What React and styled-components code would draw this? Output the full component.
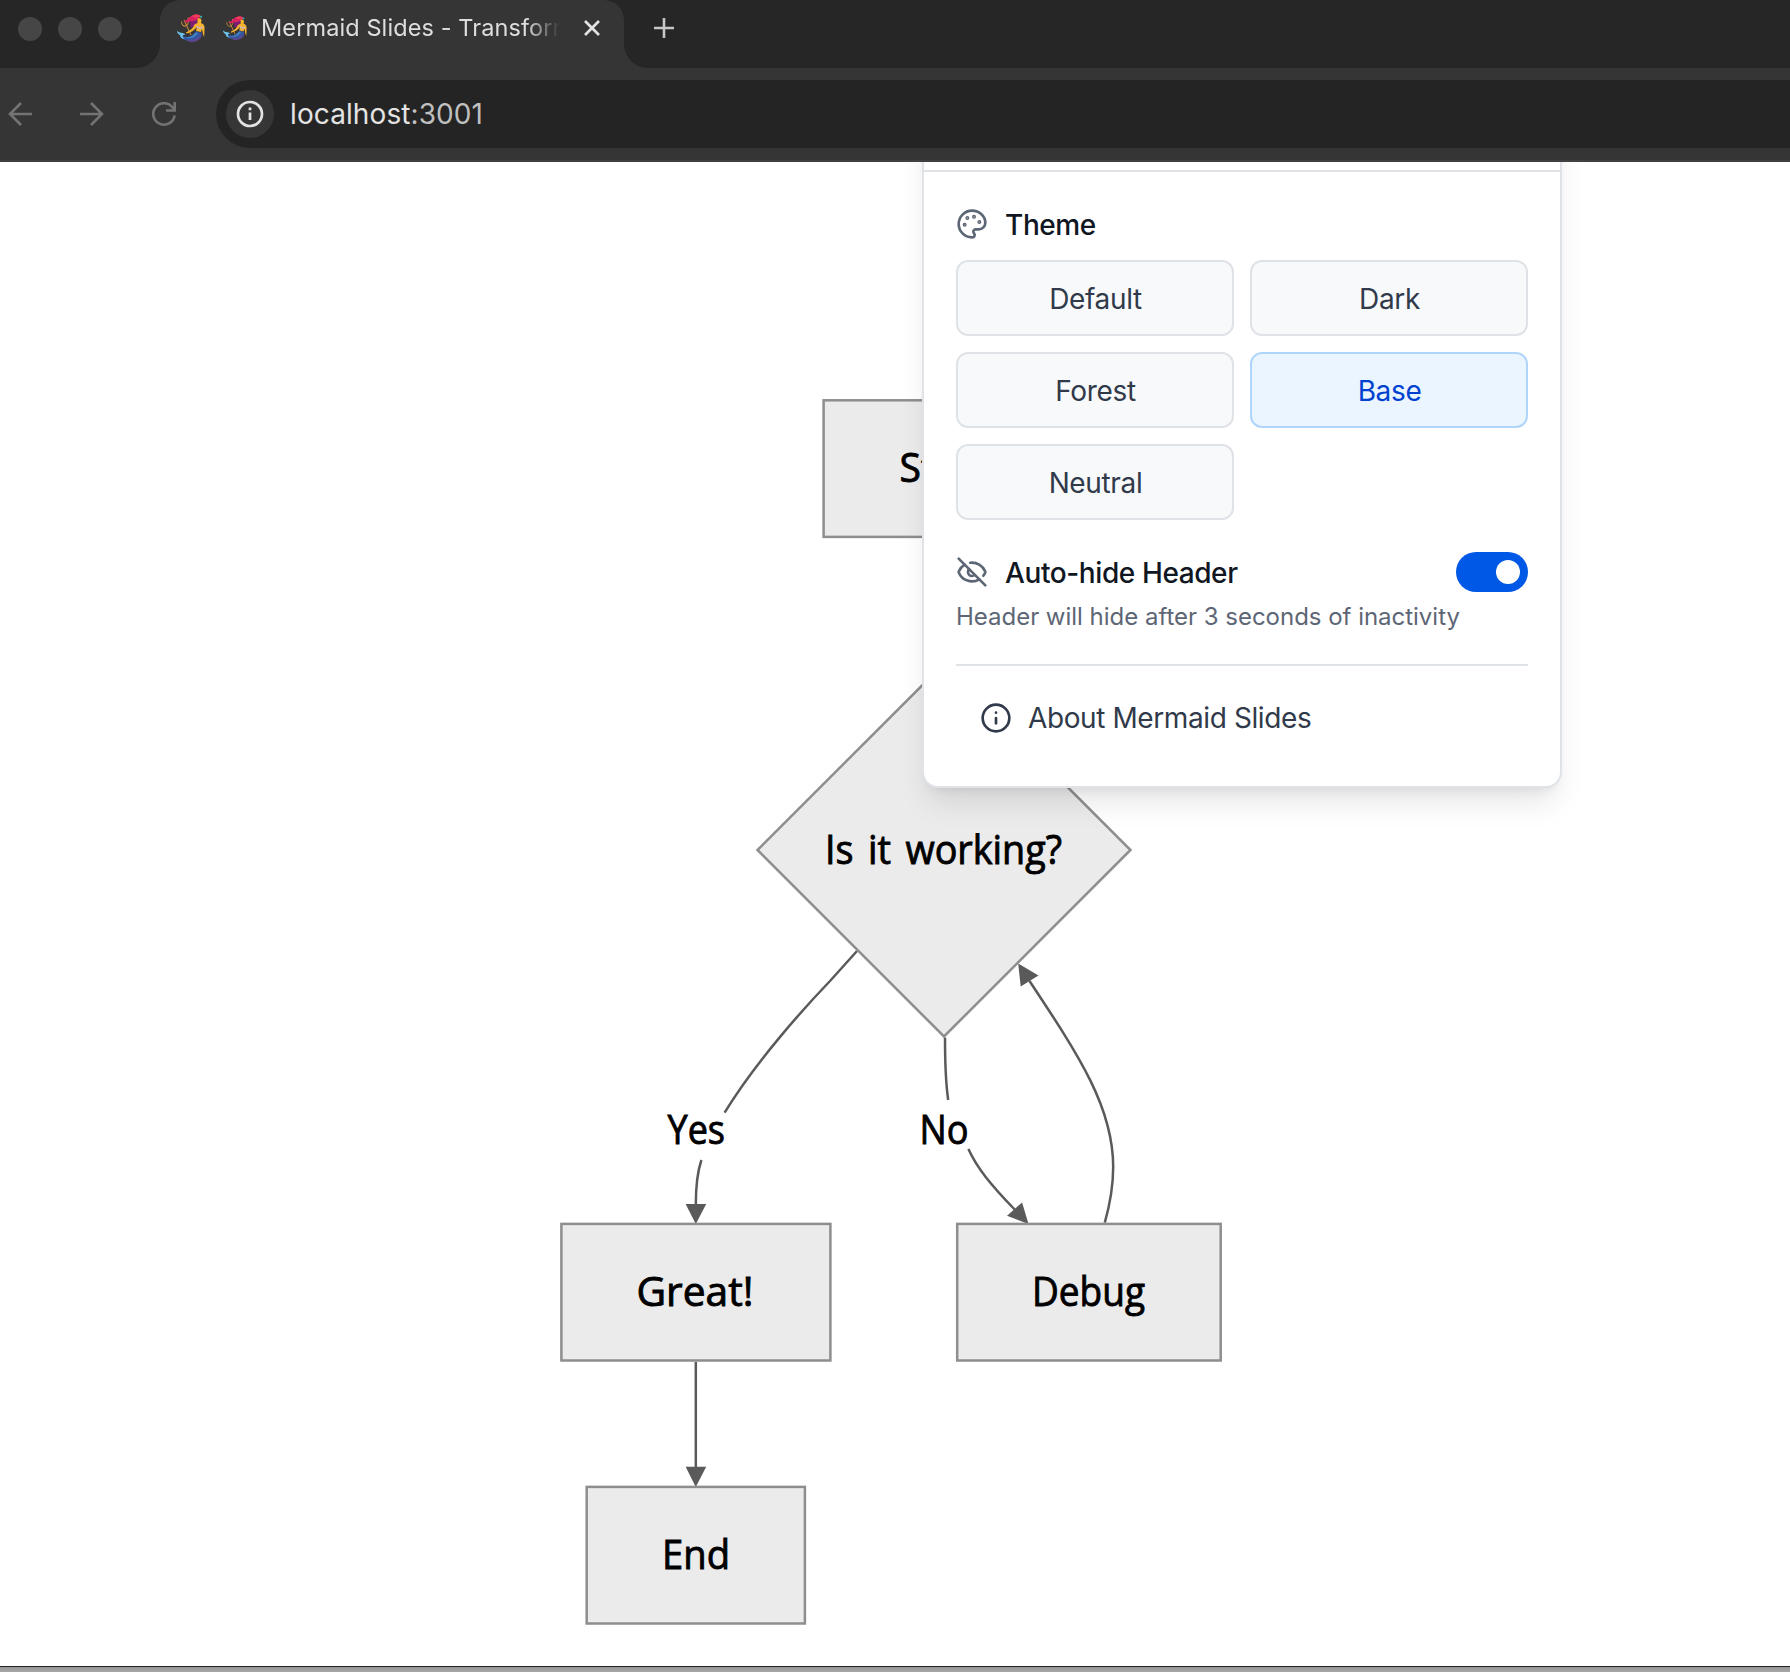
import React from "react";
import styled, { createGlobalStyle } from "styled-components";
import { Palette, EyeOff, Info } from "lucide-react";

const GlobalStyle = createGlobalStyle`
  * { box-sizing: border-box; }
  html, body { margin: 0; padding: 0; background: #fff; overflow: hidden; }
  body { font-family: Inter, "Liberation Sans", sans-serif; }
`;

const Window = styled.div`
  display: flex;
  flex-direction: column;
  width: 1790px;
  height: 1672px;
  overflow: hidden;
  background: #353535;
`;

/* Tab strip */
const TabStrip = styled.div`
  display: flex;
  height: 68px;
  flex: none;
`;

const WindowControls = styled.div`
  display: flex;
  gap: 16px;
  width: 160px;
  padding: 17px 0 0 18px;
  background: #262626;
  border-bottom-right-radius: 24px;
`;

const ControlDot = styled.span`
  width: 24px;
  height: 24px;
  border-radius: 50%;
  background: #464646;
`;

const TabSlot = styled.div`
  width: 464px;
  background: linear-gradient(#262626 0 30px, #353535 30px);
`;

const Tab = styled.div`
  display: flex;
  align-items: center;
  height: 56px;
  padding-left: 17px;
  border-radius: 20px 20px 0 0;
  background: #353535;
`;

const TabTitle = styled.div`
  display: flex;
  align-items: center;
  width: 338px;
  margin-left: 18px;
  overflow: hidden;
  white-space: nowrap;
  font-size: 23.5px;
  line-height: 34px;
  letter-spacing: 0.1px;
  color: #dedede;
  mask-image: linear-gradient(90deg, #000 302px, transparent 337px);
`;

const TitleText = styled.span`
  margin-left: 14px;
`;

const CloseIcon = styled.svg`
  margin-left: 22px;
  flex: none;
`;

const StripRest = styled.div`
  flex: 1;
  padding: 16px 0 0 28px;
  background: #262626;
  border-bottom-left-radius: 24px;
`;

/* Toolbar */
const Toolbar = styled.div`
  display: flex;
  align-items: center;
  height: 94px;
  flex: none;
  border-bottom: 2px solid #413f40;
`;

const NavIcons = styled.div`
  display: flex;
  gap: 48px;
  width: 216px;
  padding-left: 8px;
  color: #737373;
`;

const AddressBar = styled.div`
  display: flex;
  align-items: center;
  flex: 1;
  height: 68px;
  padding-left: 10px;
  background: #242424;
  border-radius: 34px 0 0 34px;
`;

const SiteInfo = styled.span`
  display: flex;
  align-items: center;
  justify-content: center;
  width: 48px;
  height: 48px;
  border-radius: 50%;
  background: #363636;
`;

const Url = styled.span`
  margin-left: 16px;
  font-size: 28px;
  letter-spacing: 0.1px;
  color: #e3e3e3;
`;

const Port = styled.span`
  color: #bfbfbf;
`;

/* Page */
const Page = styled.main`
  position: relative;
  flex: none;
  height: 1504px;
  overflow: hidden;
  background: #fff;
`;

const Canvas = styled.svg`
  display: block;
`;

const Label = styled.text`
  font-family: "Open Sans", "Noto Sans", sans-serif;
  font-size: 40.5px;
  font-weight: 500;
  word-spacing: 5px;
  fill: #000;
  stroke: #000;
  stroke-width: 0.9px;
`;

const WindowEdge = styled.div`
  flex: 1;
  border-top: 1px solid #202020;
  background: linear-gradient(#969696, #a6a6a6);
`;

/* Settings menu, floating above the diagram */
const Panel = styled.section`
  position: absolute;
  top: -64px;
  left: 922px;
  width: 640px;
  border: 2px solid #dfe3e8;
  border-radius: 16px;
  background: #fff;
  box-shadow: 0 20px 30px -6px rgba(0, 0, 0, 0.1), 0 8px 12px -8px rgba(0, 0, 0, 0.1);
`;

const PanelHeader = styled.header`
  height: 72px;
  border-bottom: 2px solid #dfe3e8;
`;

const PanelBody = styled.div`
  display: flex;
  flex-direction: column;
  padding: 32px;
`;

const Row = styled.div`
  display: flex;
  align-items: center;
  gap: 16px;
  height: 40px;
  color: #5d6675;
`;

const RowTitle = styled.h3`
  margin: 0;
  padding: 1px 0 0 1px;
  flex: 1;
  font-size: 28px;
  font-weight: 550;
  line-height: 40px;
  letter-spacing: -0.4px;
  color: #101622;
`;

const ThemeGrid = styled.div`
  display: grid;
  grid-template-columns: 1fr 1fr;
  gap: 16px;
  margin: 16px 0 32px;
`;

const ThemeButton = styled.button`
  height: 76px;
  padding: 1px 0 0 1px;
  border: 2px solid ${(p) => (p.$active ? "#afd5fb" : "#dfe2e7")};
  border-radius: 12px;
  background: ${(p) => (p.$active ? "#eaf5ff" : "#f8f9fb")};
  color: ${(p) => (p.$active ? "#0041cf" : "#303a4a")};
  font: 420 28px Inter, "Liberation Sans", sans-serif;
  letter-spacing: -0.35px;
`;

const Toggle = styled.span`
  display: flex;
  justify-content: flex-end;
  width: 72px;
  padding: 8px;
  border-radius: 20px;
  background: #0058e6;
`;

const Knob = styled.span`
  width: 24px;
  height: 24px;
  border-radius: 50%;
  background: #fff;
`;

const Hint = styled.p`
  margin: 9px 0 31px;
  font-size: 24px;
  line-height: 32px;
  letter-spacing: -0.02px;
  white-space: nowrap;
  color: #5d6675;
`;

const Footer = styled.div`
  padding-top: 16px;
  border-top: 2px solid #dfe3e8;
`;

const AboutButton = styled.button`
  display: flex;
  align-items: center;
  gap: 16px;
  width: 100%;
  height: 72px;
  padding: 0 24px;
  border: 0;
  background: none;
  color: #303a4a;
  font: 420 28px Inter, "Liberation Sans", sans-serif;
  letter-spacing: -0.4px;
`;

const FixedSvg = styled.svg`
  flex: none;
`;

const MermaidIcon = ({ size }) => (
  <FixedSvg width={size} height={size} viewBox="0 0 28 28" fill="none">
    <path d="M4.500 7.500c0 4 2.500 5.500 5 4 2-1.500 2.500-4 1.500-8M7 6l7 15" stroke="#c98a3a" strokeWidth="1.100" />
    <path d="M11 5c2 3 3 5 2 8 4 1 6-1 7-3l1-5z" fill="#7a1f74" />
    <path d="M6.500 7.500C10 7.500 12 1.500 17 1c3-1.500 6-.5 7.500 2l-4 2c-2 2-5 2.500-7 2-2 1.500-5 2-7 .5z" fill="#d9215f" />
    <path d="M15 1.800c3-2 7-1.300 8.500.7l-6 1.300z" fill="#ef3f5b" />
    <path d="M20.500 4.500c2-.8 4 0 4 2L24 9c3 1 4 3 3.500 6.500l-.3 7.500c-1.500-2-1.200-5-2.400-8L24 18l-5-1 1-5c-2 4-5 6-10.500 7.500l-.5-1c4-2 7-4 8.500-8l3-1.500z" fill="#f8b32d" />
    <path d="m19.500 12.500 3 1.700 3.500-1" stroke="#c9b6c2" strokeWidth="1.600" />
    <path d="M19 17c2 1 4 1.500 5.500 1.500 1.500 5-4 8.500-10 9C8 27 5 24.500 4.500 21.500c6 3 11 1 14.500-4.500z" fill="#36559f" />
    <path d="M9 25.500c6 1.500 12 0 15.500-4.500-.5 5-5 6.500-9.500 7-3 0-5-1-6-2.500z" fill="#5f4690" />
    <path d="M6 22.500c5 2 9.500.5 12.500-4l2.500.5c-3 5-9 7-15 3.500z" fill="#3d86c4" />
    <path d="M0 16.500c2 3 6 1.500 8.500 4-1.500.2-2.500.5-2.800 1.500 0 1 .8 2.500 2.300 3.500-3.500-.5-5-2.500-5-4.500-2-.8-3-2.500-3-4.500z" fill="#6cc3ea" />
    <circle cx="24" cy="2.800" r="1.100" fill="#29b5ad" />
  </FixedSvg>
);

const NavIcon = ({ children }) => (
  <svg width="24" height="24" viewBox="0 0 24 24" fill="none" stroke="currentColor" strokeWidth="2.600">
    {children}
  </svg>
);

const THEMES = ["Default", "Dark", "Forest", "Base", "Neutral"];

const BOXES = [
  { x: 823.6, y: 238.3, w: 240.8 },
  { x: 561.4, y: 1061.9, w: 269 },
  { x: 957.2, y: 1061.9, w: 263.500 },
  { x: 586.700, y: 1324.900, w: 218.200 },
];

const LABELS = [
  { text: "Start", x: 899.500, y: 320, w: 87 },
  { text: "Is it working?", x: 825, y: 702, w: 237 },
  { text: "Great!", x: 636.500, y: 1144, w: 117 },
  { text: "Debug", x: 1032, y: 1144, w: 113 },
  { text: "End", x: 662, y: 1407, w: 68 },
  { text: "Yes", x: 667.500, y: 982, w: 57.500 },
  { text: "No", x: 919.500, y: 982, w: 49 },
];

const EDGES = [
  "M944 375V502",
  "M857 789 830 819C806 844 756 899 724.600 950.700",
  "M701.400 998C697 1011 695.800 1027 695.800 1043",
  "M945 875.500C945 903 945.300 918 948.200 938",
  "M968.400 987C977 1006 991 1023 1014.700 1047.500",
  "M1104.800 1060.700C1110 1042 1113.200 1024 1113.200 1005C1113.200 946 1080 895 1029.500 819",
  "M695.800 1200V1306",
];

const ARROWS = [
  "685.6,1042 706.200,1042 695.800,1062",
  "1007,1053.700 1022.100,1040.500 1028.500,1062",
  "1018.200,801.500 1038.500,813.400 1020.700,824.500",
  "685.6,1304.700 706.200,1304.700 695.800,1325",
];

function Flowchart() {
  return (
    <Canvas width="1790" height="1504">
      <g fill="none" stroke="#5a5a5a" strokeWidth="2.500">
        {EDGES.map((d) => (
          <path key={d} d={d} />
        ))}
      </g>
      <g fill="#5a5a5a">
        {ARROWS.map((points) => (
          <polygon key={points} points={points} />
        ))}
      </g>
      <g fill="#ebebeb" stroke="#8e8e8e" strokeWidth="2.500">
        {BOXES.map((b) => (
          <rect key={b.x} x={b.x} y={b.y} width={b.w} height="136.600" />
        ))}
        <polygon points="944,501.500 1130.500,688 944,874.500 757.500,688" />
      </g>
      {LABELS.map((l) => (
        <Label key={l.text} x={l.x} y={l.y} textLength={l.w} lengthAdjust="spacingAndGlyphs">
          {l.text}
        </Label>
      ))}
    </Canvas>
  );
}

function SettingsPanel() {
  return (
    <Panel>
      <PanelHeader />
      <PanelBody>
        <Row>
          <Palette size={32} />
          <RowTitle>Theme</RowTitle>
        </Row>
        <ThemeGrid>
          {THEMES.map((name) => (
            <ThemeButton key={name} $active={name === "Base"}>
              {name}
            </ThemeButton>
          ))}
        </ThemeGrid>
        <Row>
          <EyeOff size={32} />
          <RowTitle>Auto-hide Header</RowTitle>
          <Toggle>
            <Knob />
          </Toggle>
        </Row>
        <Hint>Header will hide after 3 seconds of inactivity</Hint>
        <Footer>
          <AboutButton>
            <Info size={32} />
            About Mermaid Slides
          </AboutButton>
        </Footer>
      </PanelBody>
    </Panel>
  );
}

export default function App() {
  return (
    <Window>
      <GlobalStyle />
      <TabStrip>
        <WindowControls>
          <ControlDot />
          <ControlDot />
          <ControlDot />
        </WindowControls>
        <TabSlot>
          <Tab>
            <MermaidIcon size={28} />
            <TabTitle>
              <MermaidIcon size={24} />
              <TitleText>Mermaid Slides - Transform</TitleText>
            </TabTitle>
            <CloseIcon width="18" height="18" viewBox="0 0 18 18" fill="none" stroke="#e3e3e3" strokeWidth="2.700">
              <path d="m2 2 14 14M16 2 2 16" />
            </CloseIcon>
          </Tab>
        </TabSlot>
        <StripRest>
          <svg width="24" height="24" viewBox="0 0 24 24" fill="none" stroke="#c7c7c7" strokeWidth="2.600">
            <path d="M12 2v20M2 12h20" />
          </svg>
        </StripRest>
      </TabStrip>
      <Toolbar>
        <NavIcons>
          <NavIcon>
            <path d="M24 12H2.500M13 1 2 12l11 11" />
          </NavIcon>
          <NavIcon>
            <path d="M0 12h21.500M11 1l11 11-11 11" />
          </NavIcon>
          <NavIcon>
            <path d="M22.600 13.300A10.700 10.700 0 1 1 20.300 5.200L22 7.500" />
            <path d="M22.700 0v8.500H14" />
          </NavIcon>
        </NavIcons>
        <AddressBar>
          <SiteInfo>
            <svg width="28" height="28" viewBox="0 0 28 28" fill="none" stroke="#e3e3e3" strokeWidth="2.700">
              <circle cx="14" cy="14" r="12" />
              <path d="M14 12.500v7.500M14 7.500v2.700" />
            </svg>
          </SiteInfo>
          <Url>
            localhost<Port>:3001</Port>
          </Url>
        </AddressBar>
      </Toolbar>
      <Page>
        <Flowchart />
        <SettingsPanel />
      </Page>
      <WindowEdge />
    </Window>
  );
}
